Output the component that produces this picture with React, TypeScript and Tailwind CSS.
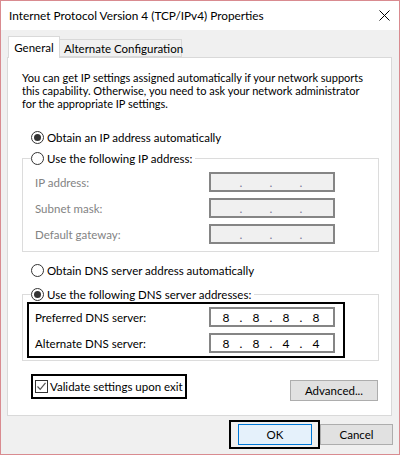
const font = { fontFamily: '"Segoe UI", Lato, "Noto Sans", sans-serif' };

function Radio({ checked }: { checked?: boolean }) {
  return (
    <span className="w-[13px] h-[13px] shrink-0 rounded-full border border-[#333] bg-white flex items-center justify-center">
      {checked && <span className="w-[7px] h-[7px] rounded-full bg-[#333]" />}
    </span>
  );
}

function IpField({ value, disabled }: { value?: string[]; disabled?: boolean }) {
  const parts = value ?? ["", "", "", ""];
  return (
    <div
      className={
        "w-[126px] h-[20px] border-2 flex items-center pl-[6px] text-[12px] " +
        (disabled ? "border-[#858585] bg-[#f0f0f0]" : "border-[#858585] bg-white")
      }
    >
      {parts.map((p, i) => (
        <div key={i} className="flex items-center">
          <span className="w-[18px] text-center text-black">{p}</span>
          {i < 3 && (
            <span className={"w-[12px] text-center " + (disabled ? "text-[#7a7a9a]" : "text-black")}>.</span>
          )}
        </div>
      ))}
    </div>
  );
}

function Row({ label, disabled, value }: { label: string; disabled?: boolean; value?: string[] }) {
  return (
    <div className="flex items-center h-[20px]">
      <span className={"w-[174px] " + (disabled ? "text-[#838383]" : "text-black")}>{label}</span>
      <IpField value={value} disabled={disabled} />
    </div>
  );
}

function Button({ children, primary, className }: { children: string; primary?: boolean; className?: string }) {
  return (
    <div
      className={
        "h-[21px] border flex items-center justify-center text-black " +
        (primary ? "bg-[#e5f1fb] border-[#0078d7] " : "bg-[#e1e1e1] border-[#adadad] ") +
        (className ?? "")
      }
    >
      {children}
    </div>
  );
}

export default function App() {
  return (
    <div
      className="w-[400px] h-[455px] border border-[#d98b90] bg-[#f0f0f0] flex flex-col text-[11.5px] leading-[13px] text-black whitespace-nowrap"
      style={font}
    >
      {/* title bar */}
      <div className="h-[29px] bg-white flex items-center justify-between pl-[8px] pr-[9px] shrink-0">
        <span className="text-[11.8px]">Internet Protocol Version 4 (TCP/IPv4) Properties</span>
        <svg width="11" height="11" viewBox="0 0 11 11" stroke="#000" strokeWidth="1">
          <path d="M0.5 0.5 L10.5 10.5 M10.5 0.5 L0.5 10.5" />
        </svg>
      </div>

      <div className="px-[6px] pt-[7px] flex flex-col">
        {/* tabs */}
        <div className="flex items-end h-[21px] pl-[1px] -mb-px relative z-10">
          <div className="w-[52px] h-[22px] bg-white border border-[#d9d9d9] border-b-0 flex items-center justify-center pb-[1px]">
            General
          </div>
          <div className="w-[122px] h-[18px] bg-[#f0f0f0] border border-[#d9d9d9] border-l-0 flex items-center pl-[4px] mb-px">
            Alternate Configuration
          </div>
        </div>

        {/* tab panel */}
        <div className="w-[385px] h-[359px] bg-white border border-[#d9d9d9] pl-[14px] pr-[12px] pt-[13px] flex flex-col">
          <p className="text-[11px]">
            You can get IP settings assigned automatically if your network supports
            <br />
            this capability. Otherwise, you need to ask your network administrator
            <br />
            for the appropriate IP settings.
          </p>

          <label className="flex items-center gap-[3px] ml-[9px] mt-[21px] h-[13px]">
            <Radio checked />
            <span>Obtain an IP address automatically</span>
          </label>

          <div className="mt-[14px] border border-[#dcdcdc] pl-[12px] pb-[7px]">
            <div className="flex items-center gap-[3px] -ml-[4px] -mt-[7px] h-[13px] bg-white w-fit pr-[3px]">
              <Radio />
              <span>Use the following IP address:</span>
            </div>
            <div className="mt-[7px] flex flex-col gap-[6px]">
              <Row label="IP address:" disabled />
              <Row label="Subnet mask:" disabled />
              <Row label="Default gateway:" disabled />
            </div>
          </div>

          <label className="flex items-center gap-[3px] ml-[9px] mt-[12px] h-[13px]">
            <Radio />
            <span>Obtain DNS server address automatically</span>
          </label>

          <div className="mt-[17px] border border-[#dcdcdc] pl-[4px] pb-[2px]">
            <div className="flex items-center gap-[3px] ml-[4px] -mt-[7px] h-[13px] bg-white w-fit pr-[3px]">
              <Radio checked />
              <span>Use the following DNS server addresses:</span>
            </div>
            <div className="mt-[1px] w-[318px] border-2 border-black pl-[6px] py-[3px] flex flex-col gap-[6px]">
              <Row label="Preferred DNS server:" value={["8", "8", "8", "8"]} />
              <Row label="Alternate DNS server:" value={["8", "8", "4", "4"]} />
            </div>
          </div>

          <div className="flex items-start mt-[13px]">
            <label className="ml-[9px] w-[156px] h-[25px] border-2 border-black flex items-center pl-[2px] gap-[2px]">
              <span className="w-[13px] h-[13px] shrink-0 border border-[#333] bg-white flex items-center justify-center">
                <svg width="11" height="11" viewBox="0 0 11 11" fill="none" stroke="#555" strokeWidth="1.2">
                  <path d="M1.5 5.5 L4.2 8.3 L9.5 1.8" />
                </svg>
              </span>
              <span>Validate settings upon exit</span>
            </label>
            <Button className="ml-auto mr-[1px] mt-[6px] w-[88px]">Advanced...</Button>
          </div>
        </div>

        {/* dialog buttons */}
        <div className="flex items-start justify-end mt-[4px]">
          <div className="border-2 border-black pl-[7px] pr-[6px] pt-[2px] pb-[2px]">
            <Button primary className="w-[74px]">OK</Button>
          </div>
          <Button className="w-[73px] mt-[4px]">Cancel</Button>
        </div>
      </div>
    </div>
  );
}
